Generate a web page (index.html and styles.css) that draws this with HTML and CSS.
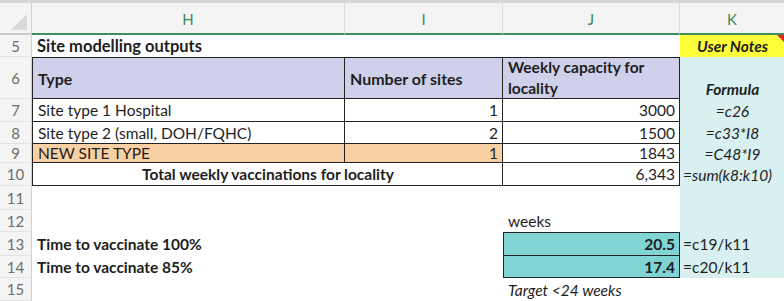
FILE: index.html
```html
<!DOCTYPE html>
<html>
<head>
<meta charset="utf-8">
<link rel="stylesheet" href="styles.css">
</head>
<body>
<div class="sheet">
  <!-- column header row -->
  <div class="corner"><span class="tri"></span></div>
  <div class="colhead">H</div>
  <div class="colhead">I</div>
  <div class="colhead">J</div>
  <div class="colhead last">K</div>

  <!-- row 5 -->
  <div class="rowhead">5</div>
  <div class="cell bold title">Site modelling outputs</div>
  <div class="cell"></div>
  <div class="cell"></div>
  <div class="cell notes-title">User Notes<span class="comment"></span></div>

  <!-- row 6 -->
  <div class="rowhead">6</div>
  <div class="cell tb th top left">Type</div>
  <div class="cell tb th top">Number of sites</div>
  <div class="cell tb th top wrap">Weekly capacity for locality</div>
  <div class="cell note formula-head">Formula</div>

  <!-- row 7 -->
  <div class="rowhead">7</div>
  <div class="cell tb left">Site type 1 Hospital</div>
  <div class="cell tb num">1</div>
  <div class="cell tb num">3000</div>
  <div class="cell note ital center">=c26</div>

  <!-- row 8 -->
  <div class="rowhead">8</div>
  <div class="cell tb left">Site type 2 (small, DOH/FQHC)</div>
  <div class="cell tb num">2</div>
  <div class="cell tb num">1500</div>
  <div class="cell note ital center">=c33*I8</div>

  <!-- row 9 -->
  <div class="rowhead">9</div>
  <div class="cell tb left orange">NEW SITE TYPE</div>
  <div class="cell tb num orange">1</div>
  <div class="cell tb num">1843</div>
  <div class="cell note ital center">=C48*I9</div>

  <!-- row 10 -->
  <div class="rowhead">10</div>
  <div class="cell tb left bold span2 center">Total weekly vaccinations for locality</div>
  <div class="cell tb num">6,343</div>
  <div class="cell note ital sum">=sum(k8:k10)</div>

  <!-- row 11 -->
  <div class="rowhead">11</div>
  <div class="cell"></div>
  <div class="cell"></div>
  <div class="cell"></div>
  <div class="cell note"></div>

  <!-- row 12 -->
  <div class="rowhead">12</div>
  <div class="cell"></div>
  <div class="cell"></div>
  <div class="cell">weeks</div>
  <div class="cell note"></div>

  <!-- row 13 -->
  <div class="rowhead">13</div>
  <div class="cell bold">Time to vaccinate 100%</div>
  <div class="cell"></div>
  <div class="cell teal first bold num">20.5</div>
  <div class="cell note plain">=c19/k11</div>

  <!-- row 14 -->
  <div class="rowhead">14</div>
  <div class="cell bold">Time to vaccinate 85%</div>
  <div class="cell"></div>
  <div class="cell teal bold num">17.4</div>
  <div class="cell note plain">=c20/k11</div>

  <!-- row 15 -->
  <div class="rowhead">15</div>
  <div class="cell"></div>
  <div class="cell"></div>
  <div class="cell ital">Target &lt;24 weeks</div>
  <div class="cell"></div>
</div>
</body>
</html>
```

FILE: styles.css
```css
html, body {
  margin: 0;
  padding: 0;
  background: #ffffff;
}

.sheet {
  width: 784px;
  height: 301px;
  overflow: hidden;
  display: grid;
  grid-template-columns: 32px 313px 158px 177px 104px;
  grid-template-rows: 35px 22px 42px 23px 22px 19px 23px 24px 22px 24px 22px 23px;
  font-family: Lato, "Open Sans", sans-serif;
  font-size: 15.5px;
  color: #1e1e1e;
}

.corner {
  position: relative;
  background: #f4f4f4;
  border-top: 3px solid #d6d6d6;
  border-right: 1px solid #d2d2d2;
  border-bottom: 2px solid #c9c9c9;
  box-sizing: border-box;
}

.tri {
  position: absolute;
  right: 4px;
  bottom: 3px;
  width: 0;
  height: 0;
  border-left: 16px solid transparent;
  border-bottom: 16px solid #d9d9d9;
}

.colhead {
  background: #f4f4f4;
  border-top: 3px solid #d6d6d6;
  border-right: 1px solid #dcdcdc;
  border-bottom: 2px solid #3f8e5e;
  box-sizing: border-box;
  display: flex;
  align-items: center;
  justify-content: center;
  color: #3a8a5a;
  font-size: 15px;
  padding-top: 2px;
}

.colhead.last {
  border-right: none;
}

.rowhead {
  background: #f4f4f4;
  border-right: 1px solid #cfcfcf;
  border-bottom: 1px solid #e2e2e2;
  box-sizing: border-box;
  display: flex;
  align-items: center;
  justify-content: center;
  color: #6e6e6e;
  font-size: 15px;
}

.cell {
  box-sizing: border-box;
  display: flex;
  align-items: center;
  padding: 0 4px 0 5px;
  white-space: nowrap;
  min-width: 0;
  position: relative;
}

.bold { font-weight: 700; font-size: 15.5px; }
.title { font-size: 16.5px; }
.ital { font-style: italic; }
.center { justify-content: center; }
.num { justify-content: flex-end; }

.tb {
  border-right: 1px solid #222;
  border-bottom: 1px solid #222;
}
.tb.top { border-top: 1px solid #222; }
.tb.left { border-left: 1px solid #222; }

.th {
  background: #cfd0ea;
  font-weight: 700;
  font-size: 16px;
}

.wrap {
  white-space: normal;
  line-height: 21px;
  align-items: center;
  font-size: 15.5px;
}

.orange { background: #f9d0a3; }

.span2 {
  grid-column: span 2;
}

.notes-title {
  background: #ffff3a;
  justify-content: center;
  font-weight: 700;
  font-style: italic;
  font-size: 15.5px;
}

.comment {
  position: absolute;
  top: 0;
  right: 0;
  width: 0;
  height: 0;
  border-left: 7px solid transparent;
  border-top: 7px solid #e0261c;
}

.note {
  background: #d8f0f0;
}

.formula-head {
  justify-content: center;
  align-items: flex-end;
  padding-bottom: 1px;
  font-weight: 700;
  font-style: italic;
  font-size: 15.5px;
}

.sum {
  padding-left: 3px;
}

.plain {
  padding-left: 3px;
}

.teal {
  background: #80d4d4;
  border: 1px solid #222;
  border-top: none;
}
.teal.first { border-top: 1px solid #222; }
```
